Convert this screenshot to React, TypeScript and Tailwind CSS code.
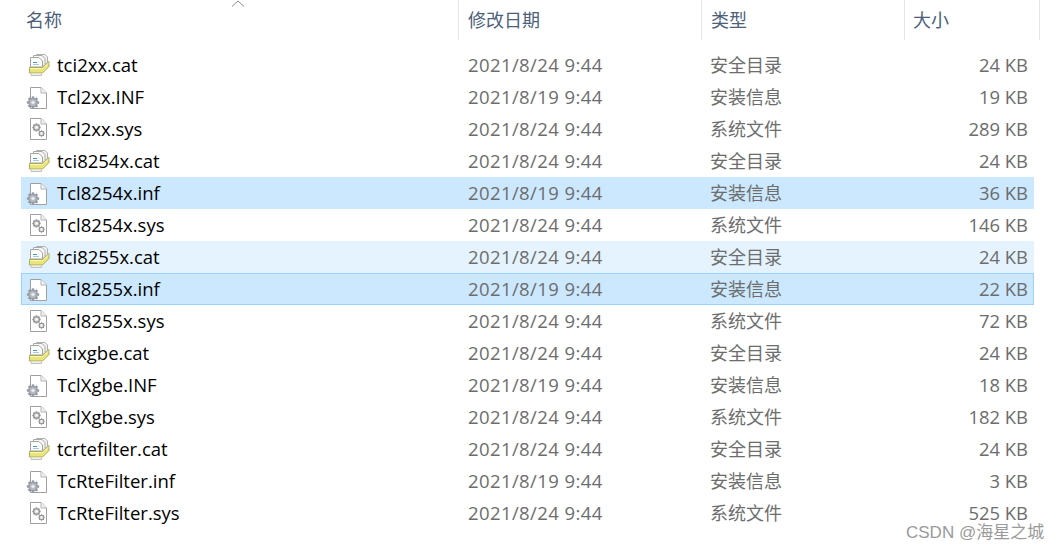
import React from "react";

type Kind = "cat" | "inf" | "sys";
type Row = { name: string; date: string; type: string; size: string; kind: Kind; state?: "sel" | "hover" | "focus" };

const rows: Row[] = [
  { name: "tci2xx.cat", date: "2021/8/24 9:44", type: "安全目录", size: "24 KB", kind: "cat" },
  { name: "Tcl2xx.INF", date: "2021/8/19 9:44", type: "安装信息", size: "19 KB", kind: "inf" },
  { name: "Tcl2xx.sys", date: "2021/8/24 9:44", type: "系统文件", size: "289 KB", kind: "sys" },
  { name: "tci8254x.cat", date: "2021/8/24 9:44", type: "安全目录", size: "24 KB", kind: "cat" },
  { name: "Tcl8254x.inf", date: "2021/8/19 9:44", type: "安装信息", size: "36 KB", kind: "inf", state: "sel" },
  { name: "Tcl8254x.sys", date: "2021/8/24 9:44", type: "系统文件", size: "146 KB", kind: "sys" },
  { name: "tci8255x.cat", date: "2021/8/24 9:44", type: "安全目录", size: "24 KB", kind: "cat", state: "hover" },
  { name: "Tcl8255x.inf", date: "2021/8/19 9:44", type: "安装信息", size: "22 KB", kind: "inf", state: "focus" },
  { name: "Tcl8255x.sys", date: "2021/8/24 9:44", type: "系统文件", size: "72 KB", kind: "sys" },
  { name: "tcixgbe.cat", date: "2021/8/24 9:44", type: "安全目录", size: "24 KB", kind: "cat" },
  { name: "TclXgbe.INF", date: "2021/8/19 9:44", type: "安装信息", size: "18 KB", kind: "inf" },
  { name: "TclXgbe.sys", date: "2021/8/24 9:44", type: "系统文件", size: "182 KB", kind: "sys" },
  { name: "tcrtefilter.cat", date: "2021/8/24 9:44", type: "安全目录", size: "24 KB", kind: "cat" },
  { name: "TcRteFilter.inf", date: "2021/8/19 9:44", type: "安装信息", size: "3 KB", kind: "inf" },
  { name: "TcRteFilter.sys", date: "2021/8/24 9:44", type: "系统文件", size: "525 KB", kind: "sys" },
];

function Gear({ cx, cy, r, fill, stroke, hole = "#fff" }: { cx: number; cy: number; r: number; fill: string; stroke: string; hole?: string }) {
  const teeth = [0, 45, 90, 135];
  return (
    <g>
      {teeth.map((a) => (
        <rect key={a} x={cx - r * 0.26} y={cy - r * 1.28} width={r * 0.52} height={r * 2.56} fill={stroke} transform={`rotate(${a} ${cx} ${cy})`} />
      ))}
      <circle cx={cx} cy={cy} r={r} fill={stroke} />
      <circle cx={cx} cy={cy} r={r * 0.72} fill={fill} />
      <circle cx={cx} cy={cy} r={r * 0.36} fill={hole} />
    </g>
  );
}

function Page({ top }: { top: number }) {
  const b = top + 21;
  return (
    <g>
      <path d={`M4.5 ${top} H15 L20.5 ${top + 5.5} V${b} H4.5 Z`} fill="#fff" stroke="#a0a0a0" />
      <path d={`M15 ${top} V${top + 5.5} H20.5`} fill="#f2f2f2" stroke="#b5b5b5" />
    </g>
  );
}

function FileIcon({ kind }: { kind: Kind }) {
  if (kind === "cat")
    return (
      <svg width="24" height="26" viewBox="0 0 24 26" className="shrink-0">
        <path d="M10.5 2.5 H19 L21.5 5 V12 H10.5 Z" fill="#f1f1f1" stroke="#b0b0b0" />
        <path d="M7.5 3.5 H16 L19 6.5 V14 H7.5 Z" fill="#f7f7f7" stroke="#aaa" />
        <path d="M4.5 5.5 H13 L16.5 9 V15 H4.5 Z" fill="#fff" stroke="#a5a5a5" />
        <path d="M7 10.5 H11" stroke="#3f8fd6" strokeWidth="1" />
        <path d="M7 12.5 H13" stroke="#a9c8e6" strokeWidth="1" />
        <path d="M3.5 15.5 H16.5 L23 9.5 V14.5 L16.5 21 H3.5 Z" fill="#e9e678" stroke="#aaa95a" />
        <path d="M4 16.5 H16.5 L22.5 11" fill="none" stroke="#f7f6bf" />
        <path d="M5 21.5 V23.5 H15.5 V21.5" fill="#ededed" stroke="#c0c0c0" />
      </svg>
    );
  if (kind === "inf")
    return (
      <svg width="24" height="26" viewBox="0 0 24 26" className="shrink-0">
        <Page top={3.5} />
        <Gear cx={7} cy={18.5} r={4.8} fill="#b4bac0" stroke="#969ca3" hole="#e8e8e8" />
      </svg>
    );
  return (
    <svg width="24" height="26" viewBox="0 0 24 26" className="shrink-0">
      <Page top={2.5} />
      <Gear cx={10.5} cy={11.5} r={3.2} fill="#d8d8d8" stroke="#8c8c8c" />
      <Gear cx={15.5} cy={17.5} r={2.5} fill="#d8d8d8" stroke="#8c8c8c" />
    </svg>
  );
}

const stateClass = {
  sel: "bg-[#cce8ff] border-[#cce8ff]",
  hover: "bg-[#e5f3ff] border-[#e5f3ff]",
  focus: "bg-[#cce8ff] border-[#99d1ff]",
};

const headers = [
  { label: "名称", cls: "w-[437px] pl-[5px]" },
  { label: "修改日期", cls: "w-[243px] pl-[9px] border-l" },
  { label: "类型", cls: "w-[203px] pl-[9px] border-l" },
  { label: "大小", cls: "w-[136px] pl-[8px] border-x" },
];

export default function App() {
  return (
    <div className="relative w-[1058px] h-[551px] overflow-hidden bg-white text-[18px] font-['Open_Sans','Noto_Sans_CJK_SC',sans-serif]">
      <div className="flex h-[40px] ml-[21px] text-[#4c607a] text-[18px]">
        {headers.map((h) => (
          <div key={h.label} className={`${h.cls} h-full flex items-center border-[#e5e5e5]`}>
            {h.label}
          </div>
        ))}
      </div>
      <svg width="14" height="8" viewBox="0 0 14 8" className="absolute left-[231px] top-0">
        <path d="M1 6.5 L7 1 L13 6.5" fill="none" stroke="#8a8a8a" strokeWidth="1" />
      </svg>
      <div className="mt-[9px] ml-[21px] w-[1013px]">
        {rows.map((r) => (
          <div key={r.name} className={`flex items-center h-[32px] border ${r.state ? stateClass[r.state] : "border-transparent"}`}>
            <div className="w-[446px] flex items-center gap-[7px] pl-[4px] text-black text-[18.5px]">
              <FileIcon kind={r.kind} />
              <span>{r.name}</span>
            </div>
            <div className="w-[243px] text-[#6d6d6d] text-[18.5px] tracking-[0.4px]">{r.date}</div>
            <div className="w-[220px] text-[#6d6d6d] -ml-[1px] mr-[1px]">{r.type}</div>
            <div className="w-[97px] text-right text-[#6d6d6d] text-[18.4px]">{r.size}</div>
          </div>
        ))}
      </div>
      <div className="absolute left-[906px] top-[522px] text-[17px] leading-[22px] text-[#9a9a9a] font-['Liberation_Sans','Noto_Sans_CJK_SC',sans-serif]">
        CSDN @海星之城
      </div>
    </div>
  );
}
